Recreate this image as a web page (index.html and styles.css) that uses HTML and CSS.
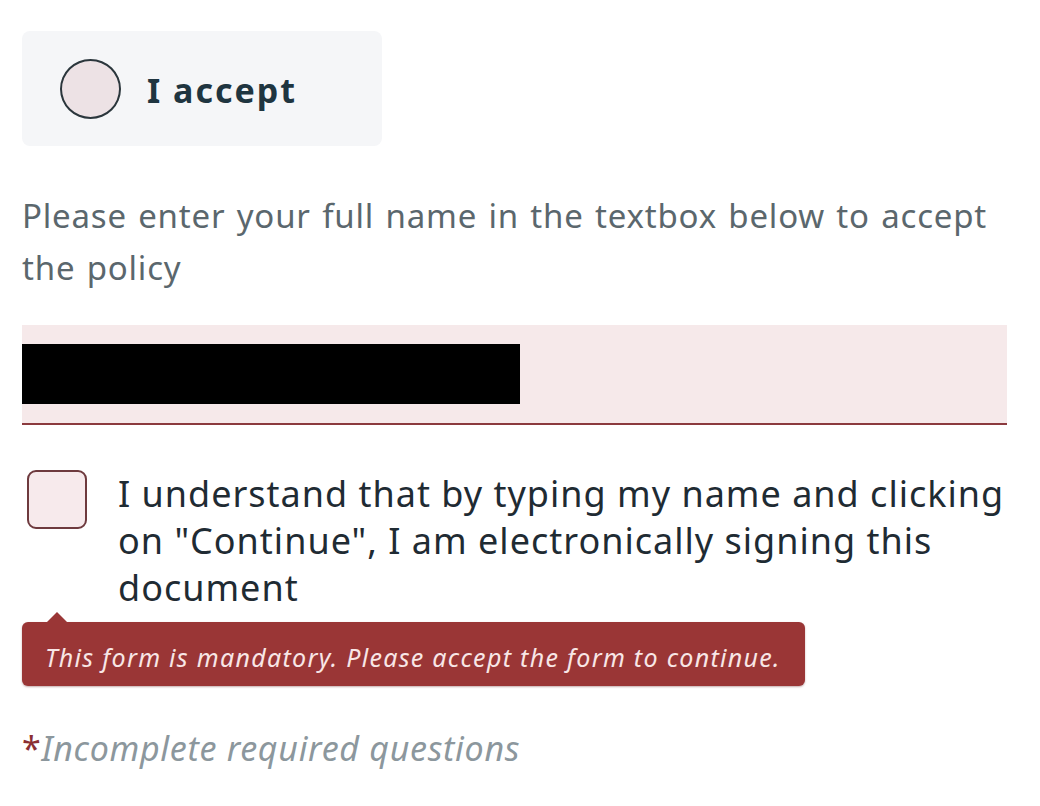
FILE: index.html
```html
<!DOCTYPE html>
<html lang="en">
<head>
<meta charset="utf-8">
<title>Policy acceptance</title>
<link rel="stylesheet" href="styles.css">
</head>
<body>
<main class="form">
  <div class="choice">
    <span class="radio"></span>
    <span class="choice-label">I accept</span>
  </div>
  <p class="instructions">Please enter your full name in the textbox below to accept the policy</p>
  <div class="field">
    <div class="redacted"></div>
  </div>
  <div class="consent">
    <span class="checkbox"></span>
    <span class="consent-text">I understand that by typing my name and clicking on "Continue", I am electronically signing this document</span>
  </div>
  <div class="tooltip">This form is mandatory. Please accept the form to continue.</div>
  <p class="footnote"><span class="star">*</span>Incomplete required questions</p>
</main>
</body>
</html>
```

FILE: styles.css
```css
html, body {
  margin: 0;
  padding: 0;
  background: #ffffff;
}

body {
  font-family: "Noto Sans", "Open Sans", sans-serif;
}

.form {
  padding: 31px 0 0 22px;
  width: 985px;
}

.choice {
  width: 360px;
  height: 115px;
  box-sizing: border-box;
  background: #f5f6f8;
  border-radius: 8px;
  display: flex;
  align-items: center;
  padding-left: 38px;
  gap: 26px;
}

.radio {
  width: 61px;
  height: 60px;
  box-sizing: border-box;
  border: 2px solid #2b363c;
  border-radius: 50%;
  background: #ede2e5;
  flex: none;
}

.choice-label {
  font-weight: 700;
  font-size: 34px;
  letter-spacing: 2px;
  color: #1f3540;
  margin-top: 2px;
}

.instructions {
  margin: 44px 0 0;
  font-size: 33px;
  line-height: 52px;
  letter-spacing: 0.8px;
  word-spacing: 2px;
  color: #5b676d;
}

.field {
  margin-top: 31px;
  height: 79px;
  padding-top: 19px;
  background: #f6e9ea;
  border-bottom: 2px solid #8b3a3e;
}

.redacted {
  width: 498px;
  height: 60px;
  background: #000000;
}

.consent {
  margin-top: 45px;
  display: flex;
  align-items: flex-start;
  gap: 31px;
  padding-left: 5px;
}

.checkbox {
  width: 60px;
  height: 59px;
  box-sizing: border-box;
  border: 2px solid #6e3a3e;
  border-radius: 9px;
  background: #f7eaec;
  flex: none;
}

.consent-text {
  flex: 0 0 900px;
  font-size: 36px;
  line-height: 47px;
  letter-spacing: 1px;
  color: #1f2b33;
}

.tooltip {
  position: relative;
  margin-top: 11px;
  width: 783px;
  height: 64px;
  box-sizing: border-box;
  background: #9a3636;
  border-radius: 6px;
  box-shadow: 0 1px 2px rgba(90, 20, 20, 0.35);
  color: #f8e6e6;
  font-style: italic;
  font-size: 25px;
  line-height: 58px;
  padding: 6px 0 0 23px;
  letter-spacing: 1.3px;
}

.tooltip::before {
  content: "";
  position: absolute;
  left: 25px;
  top: -10px;
  border-left: 10px solid transparent;
  border-right: 10px solid transparent;
  border-bottom: 10px solid #9a3636;
}

.footnote {
  margin: 40px 0 0;
  font-style: italic;
  font-size: 34px;
  line-height: 44px;
  letter-spacing: 0.7px;
  color: #8c979d;
}

.star {
  color: #8b2f33;
  font-style: normal;
}
```
